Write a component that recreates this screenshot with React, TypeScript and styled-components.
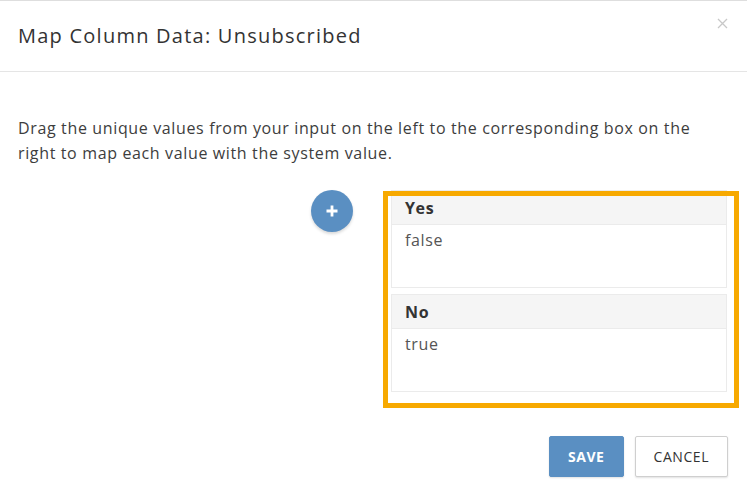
import React from "react";
import styled, { createGlobalStyle } from "styled-components";

interface Mapping {
  label: string;
  values: string[];
}

const mappings: Mapping[] = [
  { label: "Yes", values: ["false"] },
  { label: "No", values: ["true"] },
];

const App = () => (
  <>
    <GlobalStyle />
    <Modal>
      <Header>
        <Title>Map Column Data: Unsubscribed</Title>
        <Close aria-label="Close">
          <svg width="11" height="11" viewBox="0 0 11 11">
            <path d="M1 1L10 10M10 1L1 10" stroke="#c8c8c8" strokeWidth="1.3" />
          </svg>
        </Close>
      </Header>
      <Body>
        <Instructions>
          Drag the unique values from your input on the left to the corresponding box on the
          right to map each value with the system value.
        </Instructions>
        <MapRow>
          <AddColumn>
            <AddButton aria-label="Add">
              <svg width="14" height="14" viewBox="0 0 14 14">
                <path d="M7 1.5V12.5M1.5 7H12.5" stroke="#fff" strokeWidth="2.8" />
              </svg>
            </AddButton>
          </AddColumn>
          <DropZone>
            {mappings.map((m) => (
              <Panel key={m.label}>
                <PanelHeader>{m.label}</PanelHeader>
                <PanelBody>
                  {m.values.map((v) => (
                    <Value key={v}>{v}</Value>
                  ))}
                </PanelBody>
              </Panel>
            ))}
          </DropZone>
        </MapRow>
      </Body>
      <Footer>
        <Button primary>SAVE</Button>
        <Button>CANCEL</Button>
      </Footer>
    </Modal>
  </>
);

export default App;

const GlobalStyle = createGlobalStyle`
  body {
    margin: 0;
    background: #fff;
    font-family: "Open Sans", "Noto Sans", sans-serif;
    letter-spacing: 0.04em;
    color: #333;
  }
`;

const Modal = styled.div`
  width: 747px;
  height: 494px;
  border-top: 1px solid #dedede;
  box-sizing: border-box;
`;

const Header = styled.div`
  display: flex;
  align-items: flex-start;
  justify-content: space-between;
  height: 70px;
  padding: 0 19px 0 18px;
  border-bottom: 1px solid #e5e5e5;
`;

const Title = styled.h4`
  margin: 20px 0 0;
  font-size: 20px;
  font-weight: 400;
  line-height: 30px;
  letter-spacing: 0.062em;
  color: #333;
`;

const Close = styled.button`
  margin-top: 17px;
  padding: 0;
  border: none;
  background: none;
  display: flex;
  cursor: pointer;
`;

const Body = styled.div`
  padding: 0 8px 0 18px;
`;

const Instructions = styled.p`
  max-width: 700px;
  margin: 44px 0 25px;
  font-size: 16px;
  line-height: 25px;
  color: #3d3d3d;
`;

const MapRow = styled.div`
  display: grid;
  grid-template-columns: 1fr 356px;
  gap: 30px;
`;

const AddColumn = styled.div`
  display: flex;
  justify-content: flex-end;
`;

const AddButton = styled.button`
  width: 42px;
  height: 42px;
  border-radius: 50%;
  border: none;
  background: #5a8fc2;
  box-shadow: 0 2px 3px rgba(0, 0, 0, 0.15);
  display: flex;
  align-items: center;
  justify-content: center;
  padding: 0;
  margin-top: -1px;
`;

const DropZone = styled.div`
  position: relative;
  display: flex;
  flex-direction: column;
  gap: 6px;
  height: 217px;
  box-sizing: border-box;
  padding: 0 12px 0 8px;

  &::after {
    content: "";
    position: absolute;
    inset: 0;
    border: 5px solid #f7a900;
    pointer-events: none;
  }

  & > div:first-child {
    margin-top: -1px;
  }
`;

const Panel = styled.div`
  border: 1px solid #ebebeb;
  background: #fff;
`;

const PanelHeader = styled.div`
  height: 34px;
  padding: 0 13px;
  background: #f5f5f5;
  border-bottom: 1px solid #ebebeb;
  font-size: 16px;
  font-weight: 700;
  line-height: 34px;
  color: #333;
  box-sizing: border-box;
`;

const PanelBody = styled.div`
  height: 58px;
  padding: 2px 13px;
`;

const Value = styled.div`
  font-size: 16px;
  line-height: 26px;
  color: #555;
`;

const Footer = styled.div`
  display: flex;
  justify-content: flex-end;
  gap: 11px;
  padding: 28px 19px 0 0;
`;

const Button = styled.button<{ primary?: boolean }>`
  height: 41px;
  padding: 0 18px;
  border-radius: 2px;
  font-family: "Open Sans", "Noto Sans", sans-serif;
  letter-spacing: 0.04em;
  font-size: 14px;
  font-weight: ${(p) => (p.primary ? 700 : 400)};
  background: ${(p) => (p.primary ? "#5a8fc2" : "#fff")};
  color: ${(p) => (p.primary ? "#fff" : "#333")};
  border: 1px solid ${(p) => (p.primary ? "#5a8fc2" : "#cfcfcf")};
  box-shadow: 0 1px 2px rgba(0, 0, 0, 0.12);
`;
